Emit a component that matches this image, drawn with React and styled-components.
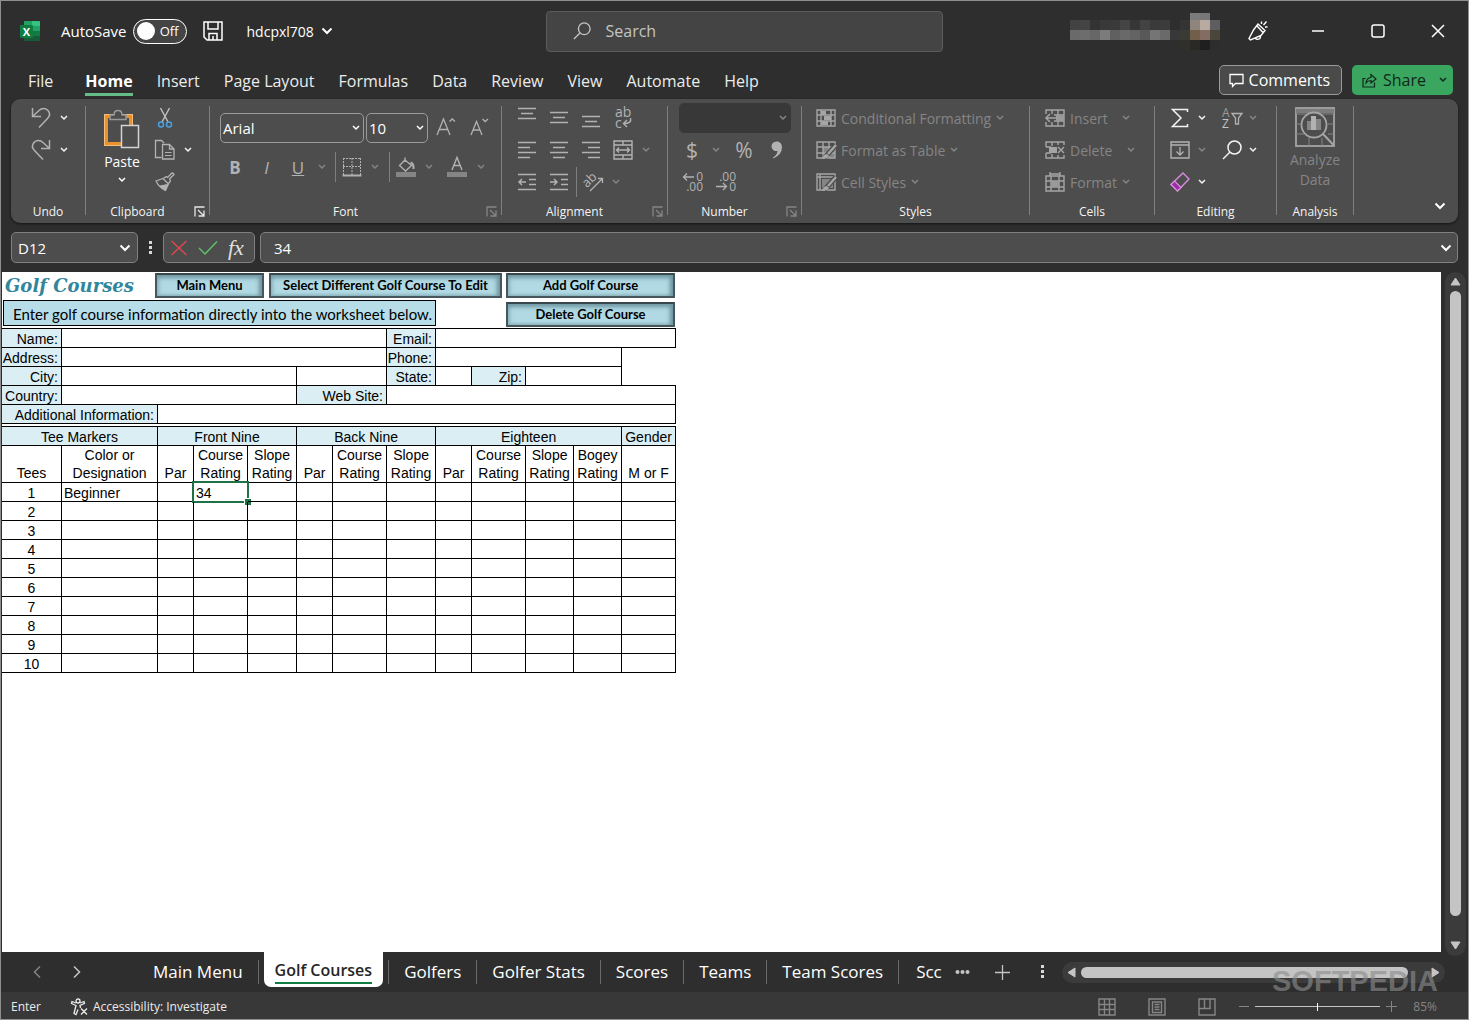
import { useState } from "react";
import styled, { createGlobalStyle, css } from "styled-components";

const GlobalStyle = createGlobalStyle`
  * {
    box-sizing: border-box;
  }
  body {
    margin: 0;
    background: #2e2e2e;
    font-family: "Open Sans", "Noto Sans", sans-serif;
    color: #fff;
  }
  button, input, select {
    font: inherit;
    color: inherit;
  }
  button {
    padding: 0;
    border: 0;
    background: none;
  }
`;

const Window = styled.div`
  position: relative;
  display: flex;
  flex-direction: column;
  min-height: 100vh;
  border: 1px solid #8f8f8f;
  background: #2e2e2e;
`;

const Svg = styled.svg`
  display: block;
  flex: none;
  overflow: visible;
  fill: none;
  stroke: currentColor;
`;

function Icon({ w = 20, h = 20, children }) {
  return (
    <Svg width={w} height={h} viewBox={`0 0 ${w} ${h}`} aria-hidden="true">
      {children}
    </Svg>
  );
}

const Chevron = () => (
  <Icon w={8} h={6}>
    <path d="M1 1L4 4L7 1" strokeWidth="1.5" />
  </Icon>
);

const BigChevron = () => (
  <Icon w={12} h={8}>
    <path d="M1.5 1.5L6 6L10.5 1.5" strokeWidth="2" />
  </Icon>
);

/* ---------- title bar ---------- */

const TitleBar = styled.header`
  display: grid;
  grid-template-columns: 1fr minmax(0, 397px) 1fr;
  align-items: center;
  height: 60px;
  padding-left: 19px;
`;

const TitleLeft = styled.div`
  display: flex;
  align-items: center;
  font-size: 15px;
`;

const AutoSave = styled.label`
  display: flex;
  align-items: center;
  gap: 6px;
  margin: 0 16px 0 21px;
`;

const Toggle = styled.span`
  display: flex;
  align-items: center;
  justify-content: space-between;
  width: 54px;
  height: 25px;
  padding: 0 7px 0 3px;
  border: 1px solid #fff;
  border-radius: 13px;
  background: #444;
  font-size: 13px;
  flex-direction: ${({ $on }) => ($on ? "row-reverse" : "row")};

  &::before {
    content: "";
    width: 18px;
    height: 18px;
    border-radius: 50%;
    background: #fff;
  }
`;

const HiddenCheck = styled.input`
  position: absolute;
  opacity: 0;
`;

const FileName = styled.button`
  display: flex;
  align-items: center;
  gap: 7px;
  margin-left: 24px;
  font-size: 14px;
`;

const SearchBox = styled.label`
  display: flex;
  align-items: center;
  height: 41px;
  gap: 15px;
  padding-left: 26px;
  border: 1px solid #5c5c5c;
  border-radius: 4px;
  background: #444;
  color: #c4c4c4;
`;

const SearchInput = styled.input`
  flex: 1;
  min-width: 0;
  padding: 0;
  border: 0;
  outline: 0;
  background: none;
  font-size: 16px;

  &::placeholder {
    color: #c4c4c4;
    opacity: 1;
  }
`;

const TitleRight = styled.div`
  display: flex;
  align-items: center;
  justify-content: flex-end;
`;

const Account = styled.div`
  margin-right: 8px;
`;

const WindowButton = styled.button`
  display: flex;
  align-items: center;
  justify-content: center;
  width: 60px;
  height: 40px;
`;

const accountTiles = [
  [12, 0, "#7b7b7b"], [13, 0, "#777"],
  [0, 1, "#424242"], [1, 1, "#444"], [2, 1, "#333"], [3, 1, "#393939"], [4, 1, "#3a3a3a"],
  [5, 1, "#444"], [6, 1, "#363636"], [7, 1, "#434343"], [8, 1, "#3a3a3a"], [9, 1, "#3c3c3c"],
  [11, 1, "#343432"], [12, 1, "#8f857c"], [13, 1, "#b9aaa1"], [14, 1, "#5e5d5f"],
  [0, 2, "#6a6a6a"], [1, 2, "#6d6d6d"], [2, 2, "#676767"], [3, 2, "#7c7c7c"], [4, 2, "#606060"],
  [5, 2, "#696969"], [6, 2, "#636363"], [7, 2, "#585858"], [8, 2, "#757575"], [9, 2, "#6a6a6a"],
  [10, 2, "#383838"], [11, 2, "#3b3b36"], [12, 2, "#725f4b"], [13, 2, "#836d62"], [14, 2, "#4a4639"],
  [11, 3, "#2f2f2c"], [12, 3, "#2a2925"], [13, 3, "#1f1f20"], [14, 3, "#2d2d2c"],
];

const AccountTiles = () => (
  <Icon w={150} h={42}>
    {accountTiles.map(([x, y, color]) => (
      <rect
        key={`${x}-${y}`}
        x={x * 10}
        y={y === 0 ? 3 : y * 10}
        width="10"
        height={y === 0 ? 7 : 10}
        fill={color}
        stroke="none"
      />
    ))}
  </Icon>
);

const ExcelLogo = () => (
  <Icon w={20} h={20}>
    <g stroke="none">
      <rect x="4" y="0" width="16" height="20" rx="1" fill="#185c37" />
      <path d="M4 1a1 1 0 0 1 1-1h7v5H4z" fill="#21a366" />
      <path d="M12 0h7a1 1 0 0 1 1 1v4h-8z" fill="#33c481" />
      <rect x="4" y="5" width="8" height="5" fill="#107c41" />
      <rect x="12" y="5" width="8" height="5" fill="#21a366" />
      <rect x="12" y="10" width="8" height="5" fill="#107c41" />
      <rect x="0" y="4" width="13" height="13" rx="1" fill="#107c41" />
      <text
        x="6.5"
        y="14.5"
        textAnchor="middle"
        fontSize="11"
        fontWeight="700"
        fontFamily="Open Sans, sans-serif"
        fill="#fff"
      >
        X
      </text>
    </g>
  </Icon>
);

/* ---------- ribbon tabs ---------- */

const MenuBar = styled.nav`
  display: flex;
  align-items: flex-start;
  height: 38px;
  padding: 4px 15px 0 15px;
`;

const MenuTab = styled.button`
  height: 31px;
  margin: 0 12px;
  font-size: 16px;
  line-height: 33px;
  color: #ececec;

  &:first-child {
    margin-right: 20px;
  }

  ${({ $active }) =>
    $active &&
    css`
      font-weight: 700;
      border-bottom: 3px solid #64bd88;
      color: #fff;
    `}
`;

const MenuActions = styled.div`
  display: flex;
  gap: 10px;
  margin-left: auto;
`;

const CommentsButton = styled.button`
  display: flex;
  align-items: center;
  gap: 5px;
  height: 30px;
  padding: 0 11px 0 9px;
  border: 1px solid #9a9a9a;
  border-radius: 5px;
  background: #4a4a4a;
  font-size: 16px;
`;

const ShareButton = styled(CommentsButton)`
  border: 0;
  padding: 0 6px 0 10px;
  gap: 6px;
  background: #3aa660;
  color: #10281a;

  span {
    margin-right: 7px;
  }
`;

/* ---------- ribbon ---------- */

const Ribbon = styled.section`
  display: flex;
  min-height: 124px;
  margin: 0 10px;
  border-radius: 9px;
  background: #4d4d4d;
  box-shadow: 0 1px 3px rgba(0, 0, 0, 0.6);
`;

const Divider = styled.div`
  flex: none;
  width: 1px;
  margin: 7px 0 8px;
  background: #7f7f7f;
`;

const Group = styled.div`
  display: flex;
  flex-direction: column;
  flex: none;
  width: ${({ $width }) => $width}px;
  padding-top: 3px;
`;

const GroupBody = styled.div`
  display: flex;
  flex-direction: ${({ $column }) => ($column ? "column" : "row")};
  gap: ${({ $gap }) => $gap || 0}px;
  height: 97px;
  padding-top: ${({ $top }) => $top || 0}px;
  padding-left: ${({ $left }) => $left}px;
`;

const Caption = styled.div`
  display: flex;
  align-items: center;
  height: 24px;
  font-size: 12px;
  color: #f4f4f4;

  span {
    flex: 1;
    text-align: center;
  }
`;

const Launcher = styled.button`
  display: flex;
  justify-content: center;
  width: 20px;
  color: ${({ $dim }) => ($dim ? "#858585" : "#e6e6e6")};
`;

const Stack = styled.div`
  display: flex;
  flex-direction: column;
`;

const Row = styled.div`
  display: flex;
  align-items: center;
  height: ${({ $height }) => $height || 32}px;
`;

const toolColors = {
  normal: "#b2b2b2",
  dim: "#858585",
  bright: "#f4f4f4",
};

const Tool = styled.button`
  display: flex;
  align-items: center;
  justify-content: center;
  flex: none;
  width: ${({ $width }) => $width || 30}px;
  height: 30px;
  font-size: ${({ $size }) => $size || 17}px;
  color: ${({ $tone }) => toolColors[$tone || "normal"]};
`;

const Separator = styled.div`
  width: ${({ $width }) => $width}px;
  height: 30px;
  background: linear-gradient(#7f7f7f, #7f7f7f) center / 1px 100% no-repeat;
`;

const PasteButton = styled.button`
  display: flex;
  flex-direction: column;
  align-items: center;
  width: 52px;
  padding-top: 7px;
  font-size: 14px;
  line-height: 26px;

  svg + svg {
    margin-top: 2px;
  }
`;

const TextTool = styled.button`
  display: flex;
  align-items: center;
  gap: 5px;
  height: 32px;
  font-size: 14px;
  color: #858585;

  svg:first-child {
    color: #a5a5a5;
  }
`;

const SelectBox = styled.div`
  display: grid;
  align-items: center;
  width: ${({ $width }) => $width}px;
  height: 30px;
  margin-right: 2px;
  border: 1px solid ${({ $empty }) => ($empty ? "#383838" : "#9a9a9a")};
  border-radius: 5px;
  background: ${({ $empty }) => ($empty ? "#383838" : "transparent")};
  color: ${({ $empty }) => ($empty ? "#858585" : "#fff")};
  font-size: 15px;

  select,
  svg {
    grid-area: 1 / 1;
  }

  svg {
    justify-self: end;
    margin-right: 3px;
    pointer-events: none;
  }
`;

const Select = styled.select`
  width: 100%;
  height: 100%;
  padding: 0 14px 0 2px;
  border: 0;
  appearance: none;
  background: none;
`;

const AnalyzeButton = styled.button`
  display: flex;
  flex-direction: column;
  align-items: center;
  width: 100%;
  padding-top: 5px;
  font-size: 14px;
  line-height: 20px;
  color: #858585;

  svg {
    margin-bottom: 3px;
    color: #a5a5a5;
  }
`;

const Collapse = styled.button`
  align-self: flex-end;
  margin: 0 12px 13px auto;
`;

const LauncherIcon = () => (
  <Icon w={11} h={11}>
    <path d="M1 10.5V1H10.5M4 4L9.5 9.5M10 4.5V10H4.5" strokeWidth="1.3" />
  </Icon>
);

function RibbonGroup({ width, label, launcher, dim, left, top, gap, column, children }) {
  return (
    <>
      <Group $width={width}>
        <GroupBody $left={left || 0} $top={top} $gap={gap} $column={column}>
          {children}
        </GroupBody>
        <Caption>
          <span>{label}</span>
          {launcher && (
            <Launcher $dim={dim} aria-label={`${label} settings`}>
              <LauncherIcon />
            </Launcher>
          )}
        </Caption>
      </Group>
      <Divider />
    </>
  );
}

function Drop({ width, tone = "dim" }) {
  return (
    <Tool $width={width} $tone={tone} aria-label="More options">
      <Chevron />
    </Tool>
  );
}

const UndoIcon = () => (
  <Icon w={20} h={22}>
    <path
      d="M1.5 1V9.5H10M1.5 9.5L8 3.5C11 0.5 15 1 17 3.5C19.5 6.5 18.5 9.5 16.5 11.5L8 20.5"
      strokeWidth="1.5"
    />
  </Icon>
);

const RedoIcon = () => (
  <Icon w={20} h={22}>
    <path
      d="M18.5 1V9.5H10M18.5 9.5L12 3.5C9 0.5 5 1 3 3.5C0.5 6.5 1.5 9.5 3.5 11.5L12 20.5"
      strokeWidth="1.5"
    />
  </Icon>
);

const PasteIcon = () => (
  <Icon w={36} h={40}>
    <rect x="2" y="7" width="25" height="28" stroke="#e8912d" strokeWidth="4" />
    <rect x="0.5" y="5.5" width="28" height="31" stroke="#f3c07c" />
    <path
      d="M6 10.5V6H10C10 3 12 1.5 14 1.5S18 3 18 6H22V10.5Z"
      fill="#4d4d4d"
      stroke="#9a9a9a"
      strokeWidth="1.5"
    />
    <rect x="17.5" y="16.5" width="17" height="22" fill="#4d4d4d" stroke="#d4d4d4" strokeWidth="1.5" />
  </Icon>
);

const CutIcon = () => (
  <Icon w={16} h={22}>
    <path d="M3.5 1L11 15M12.5 1L5 15" stroke="#c4c4c4" strokeWidth="1.4" />
    <circle cx="4" cy="17.5" r="2.5" stroke="#4ba0e0" strokeWidth="1.5" />
    <circle cx="12" cy="17.5" r="2.5" stroke="#4ba0e0" strokeWidth="1.5" />
  </Icon>
);

const CopyIcon = () => (
  <Icon w={20} h={22}>
    <path d="M6.5 18.5H0.5V1.5H6.5L9 4" strokeWidth="1.3" />
    <path d="M7.5 5.5H14.5L19 10V20H7.5ZM14.5 5.5V10H19" strokeWidth="1.3" />
    <path d="M10 13.5H16.5M10 16.5H16.5" />
  </Icon>
);

const BrushIcon = () => (
  <Icon w={20} h={20}>
    <path d="M1 9L8 6.5L13.5 12L10.5 18.5Q4.5 16 1 9Z" strokeWidth="1.3" />
    <path d="M5 14L12.5 12.5L10.5 18.5Q7.5 17 5 14Z" fill="currentColor" />
    <path d="M8.5 6.5L11 4.5L12.5 5.5L17 1Q18.5 1 19 2.5L14.5 7L15.5 9L13.5 11.5" strokeWidth="1.3" />
  </Icon>
);

const BordersIcon = () => (
  <Icon w={20} h={20}>
    <path d="M1 1.5H19M1.5 1V18M18.5 1V18M10 1V18M1 9.5H19" strokeDasharray="2 1" />
    <path d="M0.5 18.5H19.5" strokeWidth="2" />
  </Icon>
);

const FillIcon = () => (
  <Icon w={20} h={20}>
    <path d="M9 0.5V5M9 3L15.5 8.5L9.5 14L3.5 8.5Z" strokeWidth="1.3" />
    <path d="M14.5 5.5Q18 6.5 17.5 12" strokeWidth="2" />
    <rect x="0" y="15" width="20" height="5" fill="#858585" stroke="none" />
  </Icon>
);

const FontColorIcon = () => (
  <Icon w={20} h={20}>
    <path d="M5 13L10 0.5L15 13M6.8 8.5H13.2" strokeWidth="1.4" />
    <rect x="0" y="15" width="20" height="5" fill="#858585" stroke="none" />
  </Icon>
);

const GrowIcon = ({ shrink }) => (
  <Icon w={20} h={20}>
    {shrink ? (
      <path d="M2 17L7.5 3.5L13 17M4 12H11M13.5 1L16.2 3.5L19 1" strokeWidth="1.3" />
    ) : (
      <path d="M1 17L7.5 1L14 17M3.5 11.5H11.5M13.5 3.5L16.2 1L19 3.5" strokeWidth="1.3" />
    )}
  </Icon>
);

const Lines = ({ d }) => (
  <Icon w={18} h={24}>
    <path d={d} strokeWidth="1.5" />
  </Icon>
);

const WrapIcon = () => (
  <Icon w={20} h={22}>
    <g fill="currentColor" stroke="none" fontSize="14" fontFamily="Open Sans, sans-serif">
      <text x="2" y="10">ab</text>
      <text x="2" y="21">c</text>
    </g>
    <path d="M17.5 11Q19 16.5 11 16.5M14 13L10.5 16.5L14 20" strokeWidth="1.4" />
  </Icon>
);

const MergeIcon = () => (
  <Icon w={20} h={20}>
    <path
      d="M1 1H19V19H1ZM1 5H19M1 15H19M10 1V5M10 15V19M3.5 10H16.5M6 7.5L3.5 10L6 12.5M14 7.5L16.5 10L14 12.5"
      strokeWidth="1.4"
    />
  </Icon>
);

const OrientIcon = () => (
  <Icon w={22} h={20}>
    <text
      x="1"
      y="13"
      transform="rotate(-45 7 10)"
      fontSize="13"
      fontFamily="Open Sans, sans-serif"
      fill="currentColor"
      stroke="none"
    >
      ab
    </text>
    <path d="M8 19L20.5 6.5M16 6.5H20.5V11" strokeWidth="1.3" />
  </Icon>
);

const DecimalIcon = ({ less }) => (
  <Icon w={22} h={22}>
    <g fill="currentColor" stroke="none" fontSize="12" fontFamily="Open Sans, sans-serif">
      <text x="21" y="10" textAnchor="end">{less ? ".00" : "0"}</text>
      <text x="21" y="20" textAnchor="end">{less ? "0" : ".00"}</text>
    </g>
    {less ? (
      <path d="M1 15.5H11M8 12L11.5 15.5L8 19" strokeWidth="1.3" />
    ) : (
      <path d="M12 6H2M5 2.5L1.5 6L5 9.5" strokeWidth="1.3" />
    )}
  </Icon>
);

const StyleBrush = () => (
  <>
    <path d="M20 4L11 14L8 17" stroke="#4d4d4d" strokeWidth="5" />
    <path d="M20 4L12 13" stroke="#a5a5a5" strokeWidth="2.5" />
    <path d="M11 13Q7 13 6 18Q12 18 13 15Z" fill="#a5a5a5" stroke="none" />
  </>
);

const CondIcon = () => (
  <Icon w={20} h={18}>
    <path d="M1 1H19V17H1ZM5 1V17M15 1V17M1 6H19M1 12H19" strokeWidth="1.4" />
    <path d="M5 2H10V6H5ZM8 7H15V11H8ZM5 12H12V16H5Z" fill="currentColor" stroke="none" />
  </Icon>
);

const FormatTableIcon = () => (
  <Icon w={20} h={18}>
    <path d="M7 6H19V17H7Z" fill="#858585" stroke="none" />
    <path d="M1 1H19V17H1ZM7 1V17M13 1V17M1 6H19M1 12H19" strokeWidth="1.4" />
    <StyleBrush />
  </Icon>
);

const CellStylesIcon = () => (
  <Icon w={20} h={18}>
    <path d="M1 1H19V17H1ZM4 1V17M1 4H19" strokeWidth="1.4" />
    <path d="M6 6H17V15H6Z" fill="#858585" stroke="none" />
    <StyleBrush />
  </Icon>
);

const InsertIcon = () => (
  <Icon w={20} h={18}>
    <path d="M1 5V1H19V17H1V13M7 1V5M7 13V17M13 1V17M9 6H19M9 12H19" strokeWidth="1.4" />
    <path d="M11 6H19V12H11Z" fill="#9a9a9a" stroke="none" />
    <path d="M1 9H12M5 5L1 9L5 13" strokeWidth="1.5" />
  </Icon>
);

const DeleteIcon = () => (
  <Icon w={20} h={18}>
    <path
      d="M19 4V1H1V5M1 13V17H19V14M7 1V5M13 1V4M7 13V17M13 14V17M1 12H6M1 6H6M1 5V6M1 12V13"
      strokeWidth="1.4"
    />
    <path d="M4 6H12V12H4Z" fill="#a5a5a5" stroke="none" />
    <path d="M13 6L19 12M19 6L13 12" strokeWidth="1.4" />
  </Icon>
);

const FormatIcon = () => (
  <Icon w={20} h={20}>
    <path d="M5 0V4M15 0V4M5 2H15M1 4H19V19H1ZM6 4V19M14 4V19M1 9H19M1 15H19" strokeWidth="1.4" />
    <path d="M6 9H14V15H6Z" fill="#9a9a9a" stroke="none" />
  </Icon>
);

const SigmaIcon = () => (
  <Icon w={18} h={20}>
    <path d="M16.5 4V1.5H1.5L10 10L1.5 18.5H16.5V16" strokeWidth="1.5" />
  </Icon>
);

const SortFilterIcon = () => (
  <Icon w={22} h={22}>
    <g fill="#9a9a9a" stroke="none" fontSize="12" fontFamily="Open Sans, sans-serif">
      <text x="1" y="10">A</text>
      <text x="1" y="21" fill="#c4c4c4">Z</text>
    </g>
    <path d="M11 6.5H21L17.5 11V17H14.5V11Z" strokeWidth="1.3" />
  </Icon>
);

const FillDownIcon = () => (
  <Icon w={20} h={18}>
    <path d="M1 1H19V17H1ZM1 4H19" strokeWidth="1.4" />
    <path d="M10 6V14M6.5 10.5L10 14L13.5 10.5" strokeWidth="1.3" />
  </Icon>
);

const FindIcon = ({ size = 20 }) => (
  <Svg width={size} height={size} viewBox="0 0 20 20" aria-hidden="true">
    <circle cx="12.5" cy="7.5" r="6.5" strokeWidth="1.5" />
    <path d="M8 12L1 19" strokeWidth="1.5" />
  </Svg>
);

const EraserIcon = () => (
  <Icon w={20} h={20}>
    <path d="M13 1L19 7L7.5 19L1 12.5Z" stroke="#d98be0" strokeWidth="1.4" />
    <path d="M4.5 9L11 15.5L7.5 19L1 12.5Z" fill="#9a2fa5" stroke="#d98be0" strokeWidth="1.2" />
  </Icon>
);

const AnalyzeIcon = () => (
  <Icon w={40} h={40}>
    <rect x="1" y="1" width="38" height="38" strokeWidth="1.8" />
    <path d="M1 4H39" strokeWidth="4" stroke="#7c7c7c" />
    <path d="M1 7H39M1 17H7M1 27H9M33 17H39M33 27H39M14 31V39M27 31V39" stroke="#858585" />
    <circle cx="19" cy="18" r="12.5" fill="#4d4d4d" strokeWidth="1.8" />
    <path d="M28 27L39 38.5" strokeWidth="2" />
    <path d="M12 14H16V23H12Z" fill="#858585" stroke="none" />
    <path d="M16 9H21V23H16Z" fill="#b2b2b2" stroke="none" />
    <path d="M21 12H26V23H21Z" fill="#858585" stroke="none" />
  </Icon>
);

/* ---------- formula bar ---------- */

const FormulaBar = styled.div`
  display: flex;
  align-items: center;
  margin: 9px 10px;
  height: 31px;
  font-size: 15px;
`;

const Field = styled.div`
  display: flex;
  align-items: center;
  height: 31px;
  border: 1px solid #808080;
  border-radius: 5px;
  background: #4d4d4d;
`;

const NameBox = styled(Field)`
  width: 127px;
  padding: 0 6px;
`;

const FormulaTools = styled(Field)`
  gap: 10px;
  width: 92px;
  margin-right: 5px;
  padding-left: 6px;
`;

const FormulaField = styled(Field)`
  flex: 1;
  padding: 0 5px 0 13px;
`;

const PlainInput = styled.input`
  flex: 1;
  min-width: 0;
  padding: 0;
  border: 0;
  outline: 0;
  background: none;
`;

const Grip = styled.div`
  display: flex;
  justify-content: center;
  width: 25px;
`;

const FxButton = styled.button`
  font-family: "Liberation Serif", serif;
  font-size: 22px;
  font-style: italic;
  line-height: 24px;
  color: #e0e0e0;
`;

const Dots = () => (
  <Icon w={3} h={14}>
    <path d="M0 0H3V3H0ZM0 5H3V8H0ZM0 10H3V13H0Z" fill="#d8d8d8" stroke="none" />
  </Icon>
);

/* ---------- worksheet ---------- */

const Workspace = styled.main`
  display: flex;
  flex: 1;
  padding-left: 1px;
`;

const Sheet = styled.div`
  flex: 1;
  min-width: 0;
  background: #fff;
  color: #000;
  font-family: "Liberation Sans", Arial, sans-serif;
  font-size: 14px;
`;

const SheetTop = styled.div`
  display: flex;
  gap: 4px;
  width: 674px;
  height: 56px;
  padding: 1px 1px 0 1px;
`;

const SheetTopLeft = styled.div`
  display: flex;
  flex-direction: column;
  gap: 2px;
  width: 499px;
`;

const SheetTitleRow = styled.div`
  display: flex;
  align-items: center;
  gap: 5px;
`;

const SheetTitle = styled.h1`
  flex: 1;
  margin: 0;
  padding-left: 2px;
  font-family: "DejaVu Serif", Georgia, serif;
  font-size: 18px;
  font-style: italic;
  font-weight: 700;
  line-height: 24px;
  white-space: nowrap;
  color: #31869b;
`;

const SheetButton = styled.button`
  width: ${({ $width }) => ($width ? `${$width}px` : "100%")};
  height: 25px;
  padding-bottom: 1px;
  border: 2px solid #47565c;
  border-top-color: #39464c;
  background: #b0d9e3;
  box-shadow: inset 0 4px 4px -1px #6f98a3, inset 4px 0 4px -2px #93bcc7,
    inset -4px 0 4px -1px #6d929c, inset 0 -3px 3px -2px #8fb8c2;
  font-family: Lato, Carlito, sans-serif;
  font-size: 13px;
  font-weight: 700;
  line-height: 18px;
  color: #000;
  white-space: nowrap;
`;

const SheetTopRight = styled.div`
  display: flex;
  flex-direction: column;
  gap: 4px;
  flex: 1;
`;

const Notice = styled.div`
  width: 433px;
  height: 26px;
  padding-left: 9px;
  border: 1px solid #000;
  background: #b7dee8;
  font-family: Lato, Carlito, sans-serif;
  font-size: 15px;
  line-height: 27px;
`;

const Table = styled.table`
  width: 674px;
  table-layout: fixed;
  border-collapse: separate;
  border-spacing: 0;
  border-top: 1px solid #000;
  margin-bottom: 2px;

  td,
  th {
    height: 19px;
    padding: 2px 0 0;
    border: solid #000;
    border-width: 0 1px 1px 0;
    font-weight: 400;
    line-height: 16px;
    white-space: nowrap;
  }
`;

const LabelCell = styled.td`
  background: #daeef3;
  text-align: right;

  label {
    margin-right: 3px;
  }
`;

const BlankCell = styled.td`
  && {
    border-width: ${({ $line }) => ($line ? "0 0 1px 0" : "0")};
  }
`;

const CellInput = styled.input`
  display: block;
  width: 100%;
  height: 16px;
  padding: 0 2px;
  border: 0;
  outline: 0;
  background: transparent;
`;

const BandHead = styled.th`
  background: #daeef3;
`;

const SubHead = styled.th`
  && {
    height: 37px;
    padding: 0;
    vertical-align: bottom;
    line-height: 18px;
    white-space: pre-line;
  }
`;

const DataCell = styled.td`
  position: relative;
  text-align: ${({ $center }) => ($center ? "center" : "left")};

  ${({ $text }) =>
    $text &&
    css`
      && {
        padding-left: 2px;
      }
    `}
`;

const Cursor = styled.span`
  position: absolute;
  inset: -2px;
  border: 2px solid #1f7246;
  pointer-events: none;

  &::after {
    content: "";
    position: absolute;
    right: -4px;
    bottom: -4px;
    width: 6px;
    height: 6px;
    border: solid #fff;
    border-width: 1px 0 0 1px;
    background: #1f7246;
  }
`;

const widths = [60, 96, 36, 54, 49, 36, 54, 49, 36, 54, 48, 48, 54];

const Columns = () => (
  <colgroup>
    {widths.map((w, i) => (
      <col key={i} width={w} />
    ))}
  </colgroup>
);

function FormField({ id, label, labelSpan = 1, span }) {
  return (
    <>
      <LabelCell colSpan={labelSpan}>
        <label htmlFor={id}>{label}:</label>
      </LabelCell>
      <td colSpan={span}>
        <CellInput id={id} />
      </td>
    </>
  );
}

const subHeads = [
  "Tees",
  "Color or\nDesignation",
  "Par",
  "Course\nRating",
  "Slope\nRating",
  "Par",
  "Course\nRating",
  "Slope\nRating",
  "Par",
  "Course\nRating",
  "Slope\nRating",
  "Bogey\nRating",
  "M or F",
];

/* ---------- scrollbars ---------- */

const VerticalScroll = styled.div`
  display: flex;
  flex-direction: column;
  align-items: center;
  gap: 5px;
  width: 21px;
  margin: 0 2px -4px 4px;
  padding: 5px 0 6px;
  border-radius: 11px;
  background: #3b3b3b;
  color: #c4c4c4;
`;

const HorizontalScroll = styled.div`
  display: flex;
  align-items: center;
  gap: 5px;
  flex: 1;
  height: 21px;
  padding: 0 5px;
  border-radius: 11px;
  background: #3b3b3b;
  color: #c4c4c4;
`;

const Thumb = styled.div`
  flex: 1;
  border-radius: 6px;
  background: #c4c4c4;
  ${({ $vertical }) =>
    $vertical
      ? css`
          width: 11px;
          margin-bottom: 20px;
        `
      : css`
          height: 11px;
          margin-right: 18px;
        `}
`;

const Arrow = ({ d, w, h }) => (
  <Icon w={w} h={h}>
    <path d={d} fill="currentColor" strokeLinejoin="round" />
  </Icon>
);

/* ---------- sheet tabs and status ---------- */

const TabBar = styled.nav`
  display: flex;
  align-items: center;
  height: 40px;
  padding: 0 23px 0 16px;
`;

const TabArrow = styled.button`
  display: flex;
  justify-content: center;
  width: 40px;
  color: ${({ $dim }) => ($dim ? "#858585" : "#c4c4c4")};
`;

const SheetTabs = styled.div`
  display: flex;
  align-items: center;
  margin-left: 41px;
  height: 40px;
`;

const SheetTab = styled.button`
  height: 24px;
  padding: 0 15px;
  border-right: 1px solid #6a6a6a;
  font-size: 17px;
  line-height: 24px;
  white-space: nowrap;

  ${({ $active }) =>
    $active &&
    css`
      align-self: flex-start;
      height: 35px;
      margin: 0 5px;
      padding: 0 11px;
      border: 0;
      border-radius: 0 0 7px 7px;
      background: #fff;
      color: #262626;
      font-size: 16px;
      font-weight: 600;

      span {
        display: block;
        height: 28px;
        border-bottom: 2px solid #107c41;
        line-height: 28px;
      }
    `}

  ${({ $next }) =>
    $next &&
    css`
      border-left: 1px solid #6a6a6a;
    `}
`;

const CutTab = styled.button`
  width: 43px;
  padding-left: 17px;
  overflow: hidden;
  text-align: left;
  white-space: nowrap;
  font-size: 17px;
  line-height: 24px;
`;

const TabTool = styled.button`
  display: flex;
  justify-content: center;
  width: 40px;
  color: #c4c4c4;
`;

const StatusBar = styled.footer`
  display: flex;
  align-items: center;
  justify-content: space-between;
  height: 27px;
  padding: 2px 31px 0 10px;
  background: #383838;
  font-size: 12px;
`;

const StatusGroup = styled.div`
  display: flex;
  align-items: center;
  gap: ${({ $gap }) => $gap}px;
  color: ${({ $dim }) => ($dim ? "#858585" : "#ececec")};
`;

const StatusButton = styled.button`
  display: flex;
  align-items: center;
  gap: 5px;
`;

const ZoomLevel = styled.button`
  margin-left: 10px;
`;

const Zoom = styled.input`
  width: 125px;
  height: 12px;
  margin: 0;
  appearance: none;
  background: linear-gradient(#c4c4c4, #c4c4c4) center / 100% 1px no-repeat;

  &::-webkit-slider-thumb {
    appearance: none;
    width: 1px;
    height: 8px;
    background: #fff;
  }
`;

const Watermark = styled.div`
  position: absolute;
  right: 30px;
  bottom: 22px;
  font-family: "Liberation Sans", Arial, sans-serif;
  font-size: 29px;
  font-weight: 700;
  line-height: 32px;
  color: rgba(140, 140, 140, 0.65);
  pointer-events: none;
`;

const menus = [
  "File", "Home", "Insert", "Page Layout", "Formulas",
  "Data", "Review", "View", "Automate", "Help",
];

const sheets = [
  "Main Menu", "Golf Courses", "Golfers", "Golfer Stats", "Scores", "Teams", "Team Scores",
];

function Title() {
  const [autoSave, setAutoSave] = useState(false);

  return (
    <TitleBar>
      <TitleLeft>
        <ExcelLogo />
        <AutoSave>
          AutoSave
          <HiddenCheck
            type="checkbox"
            checked={autoSave}
            onChange={() => setAutoSave(!autoSave)}
          />
          <Toggle $on={autoSave}>{autoSave ? "On" : "Off"}</Toggle>
        </AutoSave>
        <button aria-label="Save">
          <Icon w={20} h={20}>
            <path d="M1 1H19V19H4L1 16ZM5 1V8H15V1M6 19V12.5H14V19M10 15V19" strokeWidth="1.5" />
          </Icon>
        </button>
        <FileName>
          hdcpxl708
          <BigChevron />
        </FileName>
      </TitleLeft>
      <SearchBox>
        <FindIcon size={18} />
        <SearchInput type="text" placeholder="Search" aria-label="Search" />
      </SearchBox>
      <TitleRight>
        <Account>
          <AccountTiles />
        </Account>
        <WindowButton aria-label="What's new">
          <Icon w={20} h={20}>
            <path d="M10 3L17 9.5L13 14.5L2.5 19L1 17.5L5.5 9ZM9 5L15 11.5M7 17Q9 19.5 12 17.5L12.5 15" strokeWidth="1.4" />
            <path d="M13.5 0.5V3M18.5 0.5L15.500 4M17 6H19.500" strokeWidth="1.4" />
          </Icon>
        </WindowButton>
        <WindowButton aria-label="Minimize">
          <Icon w={14} h={14}>
            <path d="M1 7H13" strokeWidth="1.5" />
          </Icon>
        </WindowButton>
        <WindowButton aria-label="Maximize">
          <Icon w={14} h={14}>
            <rect x="1" y="1" width="12" height="12" rx="2" strokeWidth="1.5" />
          </Icon>
        </WindowButton>
        <WindowButton aria-label="Close">
          <Icon w={14} h={14}>
            <path d="M1 1L13 13M13 1L1 13" strokeWidth="1.5" />
          </Icon>
        </WindowButton>
      </TitleRight>
    </TitleBar>
  );
}

function Menu() {
  return (
    <MenuBar>
      {menus.map((name) => (
        <MenuTab key={name} $active={name === "Home"}>
          {name}
        </MenuTab>
      ))}
      <MenuActions>
        <CommentsButton>
          <Icon w={15} h={15}>
            <path d="M1 1.5H14V10.5H6.5L3.5 13.5V10.5H1Z" strokeWidth="1.3" />
          </Icon>
          Comments
        </CommentsButton>
        <ShareButton>
          <Icon w={15} h={15}>
            <path d="M3.5 5.5H1V14H12.5V9.5" strokeWidth="1.2" />
            <path d="M4 10Q4.5 5 9 4.5V1.5L14 6L9 10V7.5Q6 7.5 4 10Z" strokeWidth="1.2" />
          </Icon>
          <span>Share</span>
          <Chevron />
        </ShareButton>
      </MenuActions>
    </MenuBar>
  );
}

function FontGroup() {
  return (
    <RibbonGroup width={291} label="Font" launcher dim left={10} top={11} gap={10} column>
      <Row $height={30}>
        <SelectBox $width={144}>
          <Select aria-label="Font" defaultValue="Arial">
            <option>Arial</option>
          </Select>
          <Chevron />
        </SelectBox>
        <SelectBox $width={62}>
          <Select aria-label="Font size" defaultValue="10">
            <option>10</option>
          </Select>
          <Chevron />
        </SelectBox>
        <Tool $width={32} aria-label="Increase font size"><GrowIcon /></Tool>
        <Tool $width={34} aria-label="Decrease font size"><GrowIcon shrink /></Tool>
      </Row>
      <Row $height={28}>
        <Tool $width={30}><b>B</b></Tool>
        <Tool $width={33}><i>I</i></Tool>
        <Tool $width={30}><u>U</u></Tool>
        <Drop width={18} />
        <Separator $width={8} />
        <Tool $width={26} aria-label="Borders"><BordersIcon /></Tool>
        <Drop width={20} />
        <Separator $width={8} />
        <Tool $width={26} aria-label="Fill color"><FillIcon /></Tool>
        <Drop width={20} />
        <Tool $width={36} aria-label="Font color"><FontColorIcon /></Tool>
        <Drop width={12} />
      </Row>
    </RibbonGroup>
  );
}

function AlignmentGroup() {
  return (
    <RibbonGroup width={165} label="Alignment" launcher dim left={9} column>
      <Row>
        <Tool $width={32} aria-label="Top align"><Lines d="M0 2.5H18M3 7.5H15M0 12.5H18" /></Tool>
        <Tool $width={32} aria-label="Middle align"><Lines d="M0 6.5H18M3 11.5H15M0 16.5H18" /></Tool>
        <Tool $width={32} aria-label="Bottom align"><Lines d="M0 10.5H18M3 15.5H15M0 20.5H18" /></Tool>
        <Tool $width={32} aria-label="Wrap text"><WrapIcon /></Tool>
      </Row>
      <Row>
        <Tool $width={32} aria-label="Align left"><Lines d="M0 4.5H18M0 9.5H12M0 14.5H18M0 19.5H12" /></Tool>
        <Tool $width={32} aria-label="Center"><Lines d="M0 4.5H18M3 9.5H15M0 14.5H18M3 19.5H15" /></Tool>
        <Tool $width={32} aria-label="Align right"><Lines d="M0 4.5H18M6 9.5H18M0 14.5H18M6 19.5H18" /></Tool>
        <Tool $width={32} aria-label="Merge"><MergeIcon /></Tool>
        <Drop width={14} />
      </Row>
      <Row>
        <Tool $width={32} aria-label="Decrease indent">
          <Lines d="M0 4.5H18M11 9.5H18M11 14.5H18M0 19.5H18M8 12H1M4 9L1 12L4 15" />
        </Tool>
        <Tool $width={32} aria-label="Increase indent">
          <Lines d="M0 4.5H18M11 9.5H18M11 14.5H18M0 19.5H18M0 12H7M4 9L7 12L4 15" />
        </Tool>
        <Separator $width={2} />
        <Tool $width={32} aria-label="Orientation"><OrientIcon /></Tool>
        <Drop width={14} />
      </Row>
    </RibbonGroup>
  );
}

function RibbonBar() {
  return (
    <Ribbon>
      <RibbonGroup width={74} label="Undo" left={18} column>
        <Row>
          <Tool $width={24} aria-label="Undo"><UndoIcon /></Tool>
          <Drop width={22} tone="bright" />
        </Row>
        <Row>
          <Tool $width={24} aria-label="Redo"><RedoIcon /></Tool>
          <Drop width={22} tone="bright" />
        </Row>
      </RibbonGroup>

      <RibbonGroup width={123} label="Clipboard" launcher left={10}>
        <PasteButton>
          <PasteIcon />
          Paste
          <Chevron />
        </PasteButton>
        <Stack>
          <Row>
            <Tool $width={34} aria-label="Cut"><CutIcon /></Tool>
          </Row>
          <Row>
            <Tool $width={34} aria-label="Copy"><CopyIcon /></Tool>
            <Drop width={12} tone="bright" />
          </Row>
          <Row>
            <Tool $width={34} aria-label="Format painter"><BrushIcon /></Tool>
          </Row>
        </Stack>
      </RibbonGroup>

      <FontGroup />
      <AlignmentGroup />

      <RibbonGroup width={133} label="Number" launcher dim left={11} column>
        <Row>
          <SelectBox $width={112} $empty>
            <Select aria-label="Number format" />
            <Chevron />
          </SelectBox>
        </Row>
        <Row>
          <Tool $width={26} $size={21}>$</Tool>
          <Drop width={22} />
          <Tool $width={34} $size={21}>%</Tool>
          <Tool $width={32} aria-label="Comma style">
            <Icon w={12} h={18}>
              <path
                d="M5.5 0.5A5 4.800 0 1 0 6.500 10Q6 14 2 16.5L2.5 17.5Q11 13.5 11 6Q10.5 0.5 5.5 0.5Z"
                fill="currentColor"
                stroke="none"
              />
            </Icon>
          </Tool>
        </Row>
        <Row>
          <Tool $width={28} aria-label="Increase decimal"><DecimalIcon /></Tool>
          <Tool $width={38} aria-label="Decrease decimal"><DecimalIcon less /></Tool>
        </Row>
      </RibbonGroup>

      <RibbonGroup width={227} label="Styles" left={14} column>
        <TextTool><CondIcon />Conditional Formatting<Chevron /></TextTool>
        <TextTool><FormatTableIcon />Format as Table<Chevron /></TextTool>
        <TextTool><CellStylesIcon />Cell Styles<Chevron /></TextTool>
      </RibbonGroup>

      <RibbonGroup width={124} label="Cells" left={15} column>
        <Row><TextTool><InsertIcon />Insert</TextTool><Drop width={36} /></Row>
        <Row><TextTool><DeleteIcon />Delete</TextTool><Drop width={38} /></Row>
        <Row><TextTool><FormatIcon />Format<Chevron /></TextTool></Row>
      </RibbonGroup>

      <RibbonGroup width={121} label="Editing" left={10} gap={8}>
        <Stack>
          <Row>
            <Tool aria-label="AutoSum" $tone="bright"><SigmaIcon /></Tool>
            <Drop width={14} tone="bright" />
          </Row>
          <Row>
            <Tool aria-label="Fill"><FillDownIcon /></Tool>
            <Drop width={14} />
          </Row>
          <Row>
            <Tool aria-label="Clear"><EraserIcon /></Tool>
            <Drop width={14} tone="bright" />
          </Row>
        </Stack>
        <Stack>
          <Row>
            <Tool aria-label="Sort and filter"><SortFilterIcon /></Tool>
            <Drop width={12} />
          </Row>
          <Row>
            <Tool aria-label="Find" $tone="bright"><FindIcon /></Tool>
            <Drop width={12} tone="bright" />
          </Row>
        </Stack>
      </RibbonGroup>

      <RibbonGroup width={76} label="Analysis">
        <AnalyzeButton>
          <AnalyzeIcon />
          <span>Analyze</span>
          <span>Data</span>
        </AnalyzeButton>
      </RibbonGroup>

      <Collapse aria-label="Collapse ribbon"><BigChevron /></Collapse>
    </Ribbon>
  );
}

function Worksheet({ value, onChange }) {
  const rows = Array.from({ length: 10 }, (_, i) => i + 1);

  return (
    <Sheet>
      <SheetTop>
        <SheetTopLeft>
          <SheetTitleRow>
            <SheetTitle>Golf Courses</SheetTitle>
            <SheetButton $width={109}>Main Menu</SheetButton>
            <SheetButton $width={233}>Select Different Golf Course To Edit</SheetButton>
          </SheetTitleRow>
          <Notice>Enter golf course information directly into the worksheet below.</Notice>
        </SheetTopLeft>
        <SheetTopRight>
          <SheetButton>Add Golf Course</SheetButton>
          <SheetButton>Delete Golf Course</SheetButton>
        </SheetTopRight>
      </SheetTop>

      <Table>
        <Columns />
        <tbody>
          <tr>
            <FormField id="name" label="Name" span={6} />
            <FormField id="email" label="Email" span={5} />
          </tr>
          <tr>
            <FormField id="address" label="Address" span={6} />
            <FormField id="phone" label="Phone" span={4} />
            <BlankCell />
          </tr>
          <tr>
            <FormField id="city" label="City" span={4} />
            <td colSpan={2} />
            <FormField id="state" label="State" span={1} />
            <FormField id="zip" label="Zip" span={2} />
            <BlankCell $line />
          </tr>
          <tr>
            <FormField id="country" label="Country" span={4} />
            <FormField id="site" label="Web Site" labelSpan={2} span={6} />
          </tr>
          <tr>
            <FormField id="info" label="Additional Information" labelSpan={2} span={11} />
          </tr>
        </tbody>
      </Table>

      <Table>
        <Columns />
        <thead>
          <tr>
            <BandHead colSpan={2}>Tee Markers</BandHead>
            <BandHead colSpan={3}>Front Nine</BandHead>
            <BandHead colSpan={3}>Back Nine</BandHead>
            <BandHead colSpan={4}>Eighteen</BandHead>
            <BandHead>Gender</BandHead>
          </tr>
          <tr>
            {subHeads.map((text, i) => (
              <SubHead key={i}>{text}</SubHead>
            ))}
          </tr>
        </thead>
        <tbody>
          {rows.map((n) => (
            <tr key={n}>
              <DataCell $center>{n}</DataCell>
              <DataCell $text>{n === 1 ? "Beginner" : ""}</DataCell>
              <DataCell />
              <DataCell>
                {n === 1 && (
                  <>
                    <CellInput aria-label="Course rating" value={value} onChange={onChange} />
                    <Cursor />
                  </>
                )}
              </DataCell>
              {widths.slice(4).map((_, i) => (
                <DataCell key={i} />
              ))}
            </tr>
          ))}
        </tbody>
      </Table>
    </Sheet>
  );
}

function App() {
  const [value, setValue] = useState("34");
  const handleChange = (e) => setValue(e.target.value);

  return (
    <>
      <GlobalStyle />
      <Window>
        <Title />
        <Menu />
        <RibbonBar />

        <FormulaBar>
          <NameBox>
            <PlainInput aria-label="Name box" defaultValue="D12" />
            <BigChevron />
          </NameBox>
          <Grip><Dots /></Grip>
          <FormulaTools>
            <button aria-label="Cancel">
              <Icon w={18} h={16}>
                <path d="M1.5 1L16.5 15M16.5 1L1.5 15" stroke="#e0484d" strokeWidth="1.4" />
              </Icon>
            </button>
            <button aria-label="Accept">
              <Icon w={20} h={16}>
                <path d="M1 8L7 14L19 1.5" stroke="#5fc46c" strokeWidth="1.4" />
              </Icon>
            </button>
            <FxButton>fx</FxButton>
          </FormulaTools>
          <FormulaField>
            <PlainInput aria-label="Formula" value={value} onChange={handleChange} />
            <BigChevron />
          </FormulaField>
        </FormulaBar>

        <Workspace>
          <Worksheet value={value} onChange={handleChange} />
          <VerticalScroll>
            <Arrow w={11} h={9} d="M5.5 1L10 8H1Z" />
            <Thumb $vertical />
            <Arrow w={11} h={9} d="M5.5 8L10 1H1Z" />
          </VerticalScroll>
        </Workspace>

        <TabBar>
          <TabArrow $dim aria-label="Previous sheet">
            <Icon w={8} h={12}><path d="M7 0.5L1.5 6L7 11.5" strokeWidth="1.5" /></Icon>
          </TabArrow>
          <TabArrow aria-label="Next sheet">
            <Icon w={8} h={12}><path d="M1 0.5L6.5 6L1 11.5" strokeWidth="1.5" /></Icon>
          </TabArrow>
          <SheetTabs>
            {sheets.map((name) => (
              <SheetTab key={name} $active={name === "Golf Courses"} $next={name === "Golfers"}>
                <span>{name}</span>
              </SheetTab>
            ))}
            <CutTab>Scc</CutTab>
          </SheetTabs>
          <TabTool aria-label="More sheets">
            <Icon w={15} h={5}>
              <g fill="currentColor" stroke="none">
                <circle cx="2.5" cy="2" r="2" />
                <circle cx="7.5" cy="2" r="2" />
                <circle cx="12.5" cy="2" r="2" />
              </g>
            </Icon>
          </TabTool>
          <TabTool aria-label="New sheet">
            <Icon w={15} h={15}><path d="M7.5 0V15M0 7.5H15" strokeWidth="1.3" /></Icon>
          </TabTool>
          <TabTool aria-label="Resize"><Dots /></TabTool>
          <HorizontalScroll>
            <Arrow w={9} h={11} d="M1 5.5L8 1V10Z" />
            <Thumb />
            <Arrow w={9} h={11} d="M8 5.5L1 1V10Z" />
          </HorizontalScroll>
        </TabBar>

        <StatusBar>
          <StatusGroup $gap={29}>
            <span>Enter</span>
            <StatusButton>
              <Icon w={18} h={18}>
                <circle cx="8" cy="3" r="2" strokeWidth="1.3" />
                <path
                  d="M6 5L2 3.5L1.5 5.5L6 7.5L4 15.5L6 16.5L8 11.5M10 5L14 3.5L14.5 5.5L10 7.5L10.5 10M11 10.5L17 16.5M17 10.5L11 16.5"
                  strokeWidth="1.3"
                />
              </Icon>
              Accessibility: Investigate
            </StatusButton>
          </StatusGroup>
          <StatusGroup $gap={23} $dim>
            <StatusGroup $gap={32} $dim>
              <button aria-label="Normal view">
                <Icon w={18} h={18}>
                  <path d="M1 1H17V17H1ZM6.5 1V17M11.5 1V17M1 6.5H17M1 11.5H17" strokeWidth="1.4" />
                </Icon>
              </button>
              <button aria-label="Page layout view">
                <Icon w={18} h={18}>
                  <path
                    d="M1 1H17V17H1ZM4.5 4H13.5V14.5H4.5ZM6.5 6.5H11.5M6.5 9H11.5M6.5 11.5H11.5"
                    strokeWidth="1.4"
                  />
                </Icon>
              </button>
              <button aria-label="Page break view">
                <Icon w={18} h={18}>
                  <path d="M1 1H17V17H1ZM6.5 1V10.5M1 10.5H12V1" strokeWidth="1.4" />
                </Icon>
              </button>
            </StatusGroup>
            <StatusGroup $gap={6} $dim>
              <button aria-label="Zoom out">
                <Icon w={10} h={11}><path d="M0 5.5H10" /></Icon>
              </button>
              <Zoom type="range" aria-label="Zoom" min="0" max="100" defaultValue="50" />
              <button aria-label="Zoom in">
                <Icon w={11} h={11}><path d="M0 5.5H11M5.5 0V11" /></Icon>
              </button>
              <ZoomLevel>85%</ZoomLevel>
            </StatusGroup>
          </StatusGroup>
        </StatusBar>

        <Watermark>SOFTPEDIA</Watermark>
      </Window>
    </>
  );
}

export default App;
